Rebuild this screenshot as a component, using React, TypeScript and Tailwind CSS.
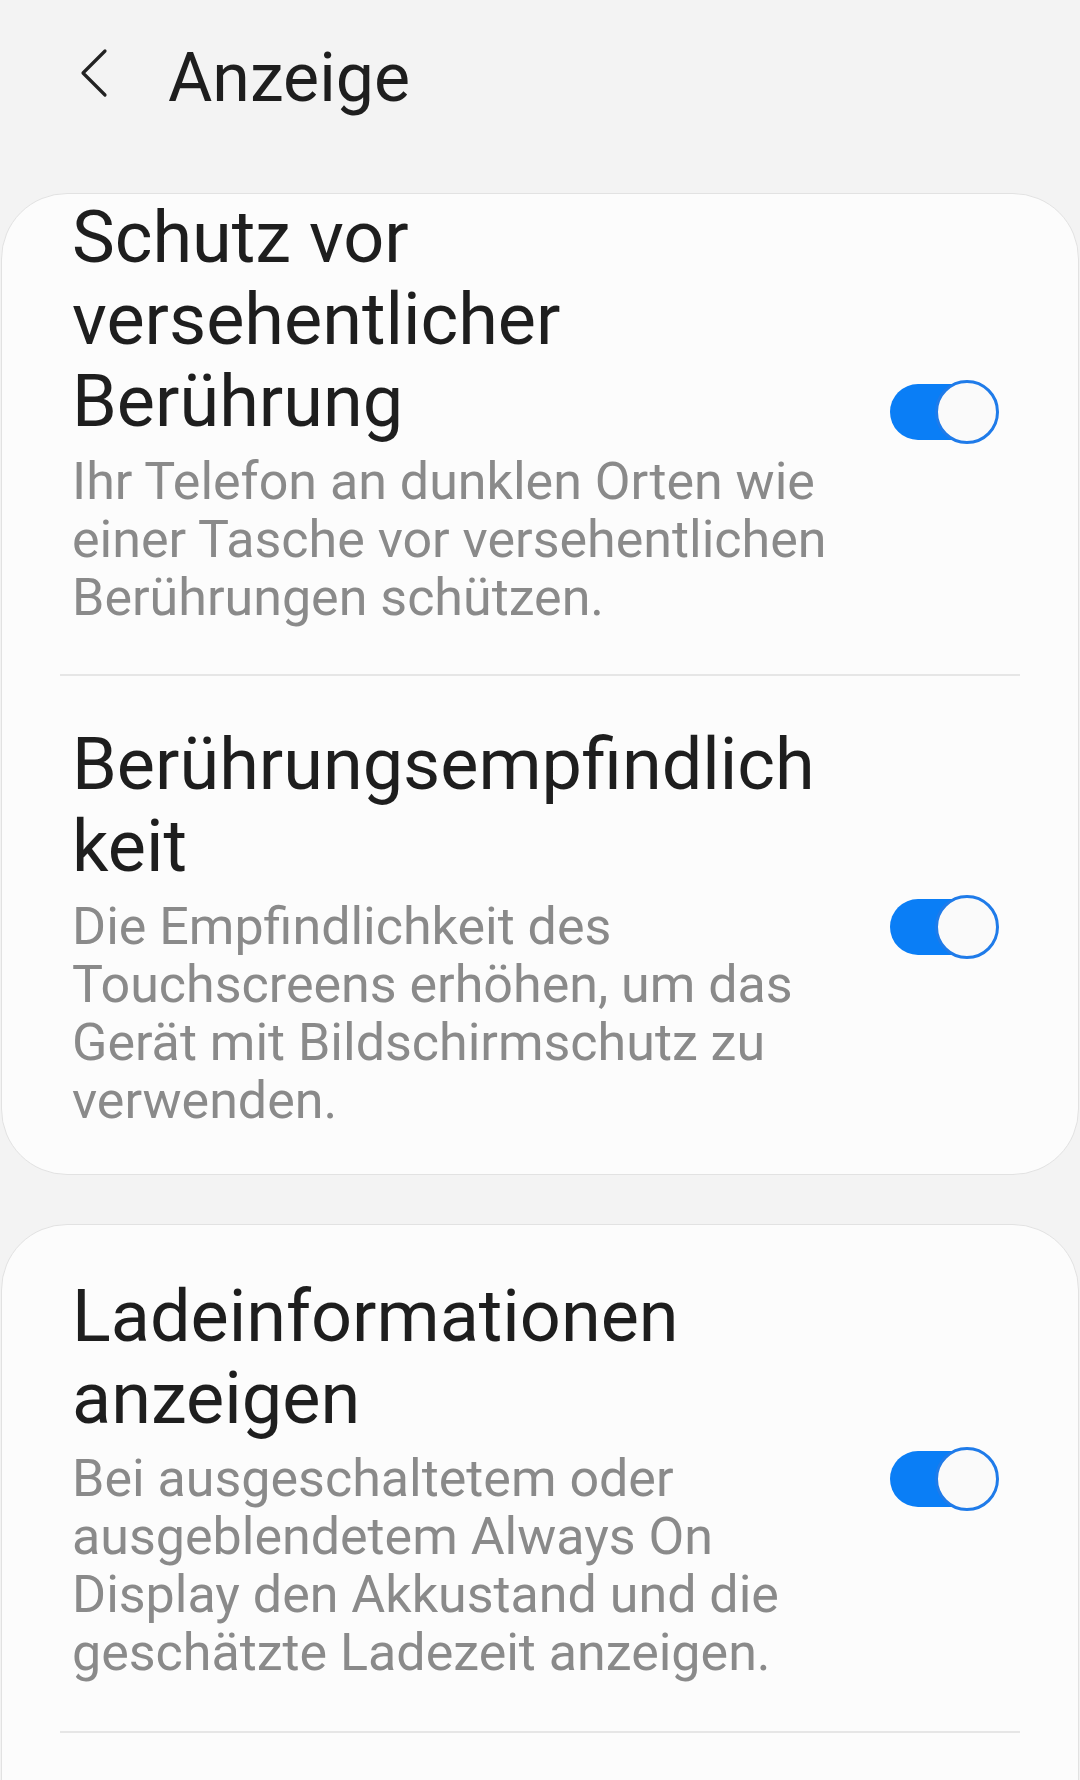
import React from "react";

function Toggle() {
  return (
    <div className="relative w-[109px] h-[64px] shrink-0">
      <div className="absolute left-0 top-[4px] h-[56px] w-[92px] rounded-full bg-[#0a7ef6]" />
      <div className="absolute right-0 top-0 h-[64px] w-[64px] rounded-full border-[3px] border-[#1f7be9] bg-[#fafafa]" />
    </div>
  );
}

type ItemProps = {
  title: string[];
  desc: string[];
  className: string;
};

function Item({ title, desc, className }: ItemProps) {
  return (
    <div className={"flex items-center " + className}>
      <div className="flex-1 min-w-0 whitespace-nowrap">
        <div className="text-[72px] leading-[82px] text-[#1e1e1e]">
          {title.map((t) => (
            <span key={t} className="block">
              {t}
            </span>
          ))}
        </div>
        <div className="mt-[10px] text-[52px] leading-[58px] text-[#8a8a8a]">
          {desc.map((t) => (
            <span key={t} className="block">
              {t}
            </span>
          ))}
        </div>
      </div>
      <Toggle />
    </div>
  );
}

export default function App() {
  return (
    <div className="w-[1080px] h-[1780px] overflow-hidden bg-[#f3f3f3] font-['Roboto',_'Noto_Sans',sans-serif]">
      <header className="flex items-start h-[193px] pt-[38px] pl-[80px]">
        <svg
          className="mt-[10px] w-[28px] h-[50px] shrink-0"
          viewBox="0 0 28 50"
          fill="none"
          stroke="#222222"
          strokeWidth="3.2"
          strokeLinecap="round"
          strokeLinejoin="round"
        >
          <polyline points="25,3 3,25 25,47" />
        </svg>
        <h1 className="ml-[60px] text-[68px] leading-[80px] text-[#1e1e1e]">Anzeige</h1>
      </header>

      <section className="mx-[1px] rounded-[66px] border border-[#e2e2e2] bg-[#fcfcfc] pl-[70px] pr-[79px]">
        <Item
          className="pt-[3px] pb-[47px]"
          title={["Schutz vor", "versehentlicher", "Berührung"]}
          desc={[
            "Ihr Telefon an dunklen Orten wie",
            "einer Tasche vor versehentlichen",
            "Berührungen schützen.",
          ]}
        />
        <div className="-ml-[12px] -mr-[21px] h-[2px] bg-[#e6e6e6]" />
        <Item
          className="pt-[48px] pb-[44px]"
          title={["Berührungsempfindlich", "keit"]}
          desc={[
            "Die Empfindlichkeit des",
            "Touchscreens erhöhen, um das",
            "Gerät mit Bildschirmschutz zu",
            "verwenden.",
          ]}
        />
      </section>

      <section className="mt-[49px] mx-[1px] rounded-[66px] border border-[#e2e2e2] bg-[#fcfcfc] pl-[70px] pr-[79px] pb-[120px]">
        <Item
          className="pt-[51px] pb-[49px]"
          title={["Ladeinformationen", "anzeigen"]}
          desc={[
            "Bei ausgeschaltetem oder",
            "ausgeblendetem Always On",
            "Display den Akkustand und die",
            "geschätzte Ladezeit anzeigen.",
          ]}
        />
        <div className="-ml-[12px] -mr-[21px] h-[2px] bg-[#e6e6e6]" />
      </section>
    </div>
  );
}
